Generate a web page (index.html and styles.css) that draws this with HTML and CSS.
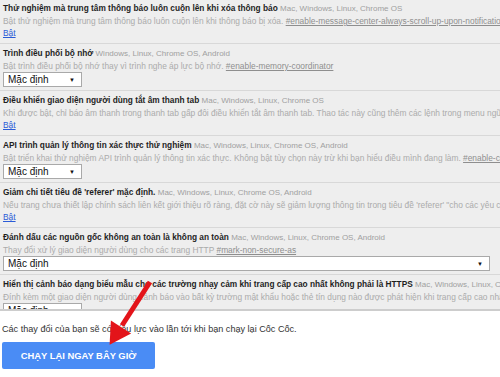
FILE: index.html
```html
<!DOCTYPE html>
<html lang="vi">
<head>
    <meta charset="UTF-8">
    <meta name="viewport" content="width=device-width, initial-scale=1.0">
    <title>Cờ thử nghiệm</title>
    <link rel="stylesheet" href="styles.css">
</head>
<body>

<!-- danh sách cờ -->
<div class="flags">
    <div class="flag-list">
        <div class="flag">
            <div class="flag-title"><b>Thử nghiệm mà trung tâm thông báo luôn cuộn lên khi xóa thông báo</b> <span class="platforms">Mac, Windows, Linux, Chrome OS</span></div>
            <div class="flag-desc">Bật thử nghiệm mà trung tâm thông báo luôn cuộn lên khi thông báo bị xóa. <a href="#" class="flag-hash">#enable-message-center-always-scroll-up-upon-notification-removal</a></div>
            <div class="flag-enable"><a href="#">Bật</a></div>
        </div>

        <div class="flag">
            <div class="flag-title"><b>Trình điều phối bộ nhớ</b> <span class="platforms">Windows, Linux, Chrome OS, Android</span></div>
            <div class="flag-desc">Bật trình điều phối bộ nhớ thay vì trình nghe áp lực bộ nhớ. <a href="#" class="flag-hash">#enable-memory-coordinator</a></div>
            <div class="choice"><span>Mặc định</span><span class="caret">▼</span></div>
        </div>

        <div class="flag">
            <div class="flag-title"><b>Điều khiển giao diện người dùng tắt âm thanh tab</b> <span class="platforms">Mac, Windows, Linux, Chrome OS</span></div>
            <div class="flag-desc">Khi được bật, chỉ báo âm thanh trong thanh tab gấp đôi điều khiển tắt âm thanh tab. Thao tác này cũng thêm các lệnh trong menu ngữ cảnh tab để tắt nhanh âm thanh nhiều tab đã chọn. <a href="#" class="flag-hash">#enable-tab-audio-muting</a></div>
            <div class="flag-enable"><a href="#">Bật</a></div>
        </div>

        <div class="flag">
            <div class="flag-title"><b>API trình quản lý thông tin xác thực thử nghiệm</b> <span class="platforms">Mac, Windows, Linux, Chrome OS, Android</span></div>
            <div class="flag-desc">Bật triển khai thử nghiệm API trình quản lý thông tin xác thực. Không bật tùy chọn này trừ khi bạn hiểu điều mình đang làm. <a href="#" class="flag-hash">#enable-credential-manager-api</a></div>
            <div class="choice"><span>Mặc định</span><span class="caret">▼</span></div>
        </div>

        <div class="flag">
            <div class="flag-title"><b>Giảm chi tiết tiêu đề 'referer' mặc định.</b> <span class="platforms">Mac, Windows, Linux, Chrome OS, Android</span></div>
            <div class="flag-desc">Nếu trang chưa thiết lập chính sách liên kết giới thiệu rõ ràng, đặt cờ này sẽ giảm lượng thông tin trong tiêu đề 'referer' "cho các yêu cầu trên nhiều nguồn gốc.</div>
            <div class="flag-enable"><a href="#">Bật</a></div>
        </div>

        <div class="flag">
            <div class="flag-title"><b>Đánh dấu các nguồn gốc không an toàn là không an toàn</b> <span class="platforms">Mac, Windows, Linux, Chrome OS, Android</span></div>
            <div class="flag-desc">Thay đổi xử lý giao diện người dùng cho các trang HTTP <a href="#" class="flag-hash">#mark-non-secure-as</a></div>
            <div class="choice wide"><span>Mặc định</span><span class="caret">▼</span></div>
        </div>

        <div class="flag">
            <div class="flag-title"><b>Hiển thị cảnh báo dạng biểu mẫu cho các trường nhạy cảm khi trang cấp cao nhất không phải là HTTPS</b> <span class="platforms">Mac, Windows, Linux, Chrome OS</span></div>
            <div class="flag-desc">Đính kèm một giao diện người dùng cảnh báo vào bất kỳ trường mật khẩu hoặc thẻ tín dụng nào được phát hiện khi trang cấp cao nhất không phải là HTTPS</div>
            <div class="choice"><span>Mặc định</span><span class="caret">▼</span></div>
        </div>
    </div>
</div>

<!-- chạy lại -->
<div class="footer">
    <p class="note">Các thay đổi của bạn sẽ có hiệu lực vào lần tới khi bạn chạy lại Cốc Cốc.</p>
    <button class="relaunch">CHẠY LẠI NGAY BÂY GIỜ</button>
</div>

<svg class="arrow" width="500" height="377" viewBox="0 0 500 377">
    <line x1="150" y1="282" x2="122" y2="325.5" stroke="#e3141a" stroke-width="5"/>
    <polygon points="131.1,333.5 110.9,320.5 109.6,344.7" fill="#e3141a"/>
</svg>

</body>
</html>
```

FILE: styles.css
```css
body {
    font-family: 'Liberation Sans', Arial, sans-serif;
    margin: 0;
    padding: 0;
    width: 500px;
    height: 377px;
    overflow: hidden;
    background-color: #fff;
    color: #222;
    position: relative;
}

.flags {
    height: 309px;
    overflow: hidden;
    background-color: #eeeeee;
    border-bottom: 2px solid #cdcdcd;
}

.flag-list {
    margin-top: -1px;
}

.flag {
    padding: 3px 4px 3px 3px;
    border-bottom: 1px solid #d8d8d8;
    white-space: nowrap;
}

.flag-title {
    font-size: 8.3px;
    line-height: 13px;
    color: #1e1e1e;
}

.platforms {
    font-size: 8px;
    color: #a0a0a0;
}

.flag-desc {
    font-size: 8.4px;
    line-height: 12px;
    color: #ababab;
}

.flag-hash {
    color: #8e8e8e;
}

.flag-enable {
    font-size: 8.4px;
    line-height: 13px;
}

.flag-enable a {
    color: #2a5bd7;
}

.choice {
    display: flex;
    justify-content: space-between;
    align-items: center;
    box-sizing: border-box;
    width: 79px;
    height: 15px;
    padding: 0 6px 0 4px;
    background: #fff;
    border: 1px solid #a9a9a9;
    font-size: 10px;
    color: #111;
}

.choice.wide {
    width: 487px;
}

.caret {
    font-size: 6px;
}

.footer {
    padding: 0 2px;
}

.note {
    margin: 11px 0 0;
    font-size: 9.1px;
    line-height: 14px;
    color: #333;
}

.relaunch {
    display: block;
    margin-top: 6px;
    width: 153px;
    height: 27px;
    border: none;
    border-radius: 2px;
    background-color: #4a8cf5;
    color: #fff;
    font-family: 'Liberation Sans', Arial, sans-serif;
    font-size: 9.4px;
    font-weight: bold;
    padding: 0;
    text-align: center;
}

.arrow {
    position: absolute;
    top: 0;
    left: 0;
    pointer-events: none;
}
```
